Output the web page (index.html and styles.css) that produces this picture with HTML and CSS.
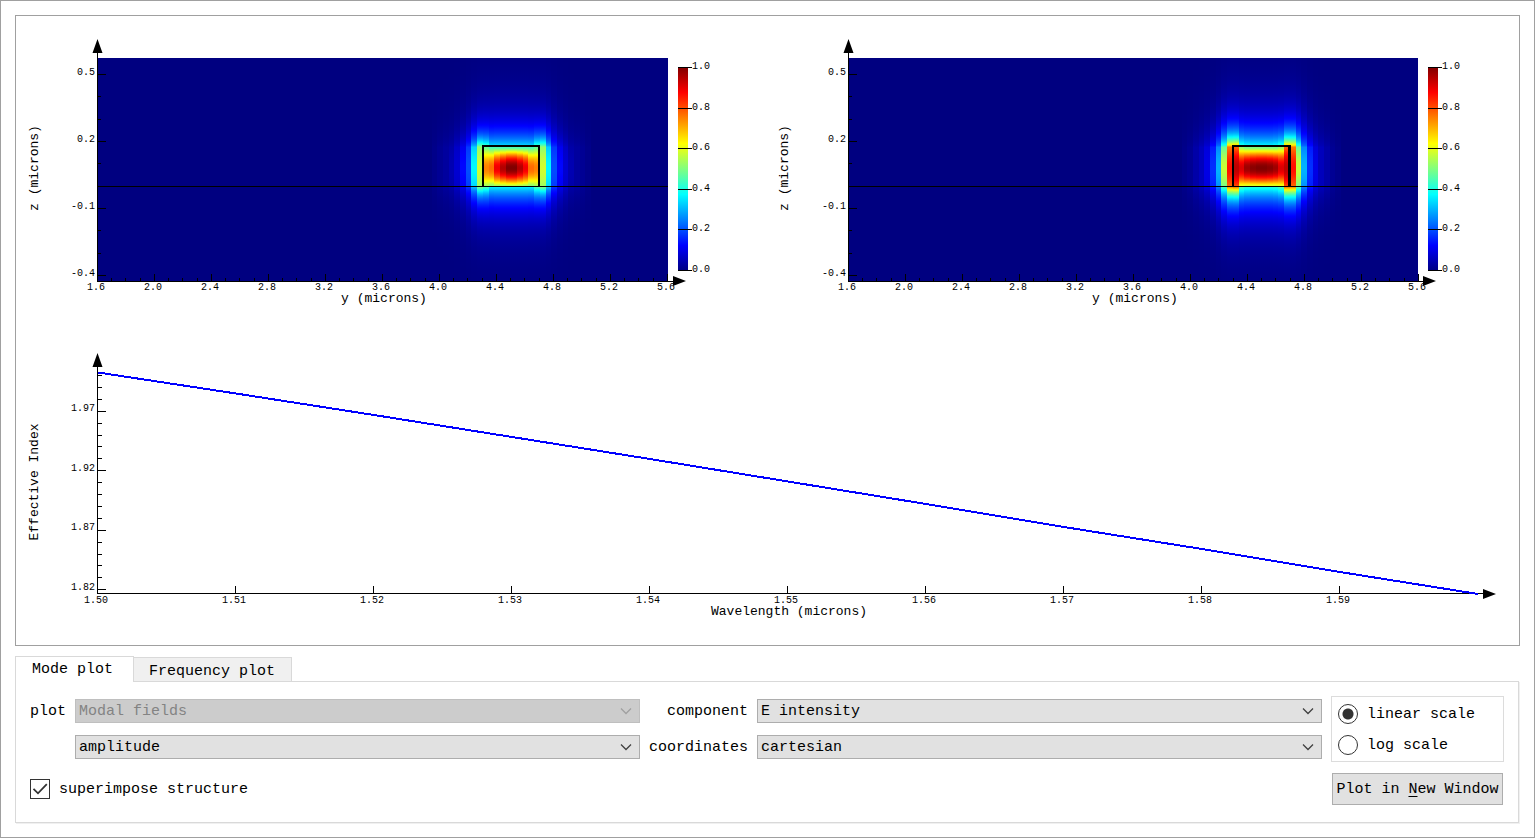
FILE: index.html
```html
<!DOCTYPE html>
<html lang="en">
<head>
<meta charset="utf-8">
<title>Mode plot</title>
<link rel="stylesheet" href="styles.css">
</head>
<body>
<main class="window">
  <section class="plots" aria-label="Plots">
    <svg class="plot" id="field-a" viewBox="0 0 751 320"></svg>
    <svg class="plot" id="field-b" viewBox="0 0 751 320"></svg>
    <svg class="plot plot-wide" id="index-plot" viewBox="0 0 1502 309"></svg>
  </section>

  <div class="tabs" role="tablist">
    <button class="tab tab-active" type="button" role="tab" aria-selected="true">Mode plot</button>
    <button class="tab" type="button" role="tab" aria-selected="false">Frequency plot</button>
  </div>

  <form class="panel">
    <label for="plot">plot</label>
    <span class="combo">
      <select id="plot" disabled><option>Modal fields</option></select>
      <svg class="chevron" viewBox="0 0 12 8"><path d="M1 1.5 6 6.5 11 1.5"/></svg>
    </span>
    <label class="label-right" for="component">component</label>
    <span class="combo">
      <select id="component"><option>E intensity</option></select>
      <svg class="chevron" viewBox="0 0 12 8"><path d="M1 1.5 6 6.5 11 1.5"/></svg>
    </span>

    <fieldset class="scale">
      <label class="choice"><input type="radio" name="scale" checked><span>linear scale</span></label>
      <label class="choice"><input type="radio" name="scale"><span>log scale</span></label>
    </fieldset>

    <span class="combo combo-second">
      <select id="quantity" aria-label="quantity"><option>amplitude</option></select>
      <svg class="chevron" viewBox="0 0 12 8"><path d="M1 1.5 6 6.5 11 1.5"/></svg>
    </span>
    <label class="label-right" for="coordinates">coordinates</label>
    <span class="combo">
      <select id="coordinates"><option>cartesian</option></select>
      <svg class="chevron" viewBox="0 0 12 8"><path d="M1 1.5 6 6.5 11 1.5"/></svg>
    </span>

    <label class="superimpose">
      <span class="check">
        <input type="checkbox" checked>
        <svg class="tick" viewBox="0 0 20 20"><path d="M3.5 9.8 8 14.3 16.8 5.2"/></svg>
      </span><span>superimpose structure</span>
    </label>
    <button class="push" type="button">Plot in <u>N</u>ew Window</button>
  </form>
</main>
<script src="plots.js"></script>
</body>
</html>
```
FILE: styles.css
```css
* {
  box-sizing: border-box;
}

body {
  margin: 0 1px 1px 0;
  background: #fff;
  color: #000;
  font: 15px/20px "Liberation Mono", "Courier New", monospace;
}

button,
select {
  font: inherit;
  color: inherit;
}

.window {
  border: 1px solid #a0a0a0;
  padding: 14px;
}

.plots {
  display: grid;
  grid-template-columns: 1fr 1fr;
  border: 1px solid #a0a0a0;
  padding-right: 1px;
}

.plot {
  display: block;
  width: 100%;
  height: auto;
}

.plot-wide {
  grid-column: 1 / -1;
}

.axis,
.structure {
  fill: none;
  stroke: #000;
  shape-rendering: crispEdges;
}

.cell {
  shape-rendering: crispEdges;
}

.curve {
  fill: none;
  stroke: #00f;
  stroke-width: 2;
  shape-rendering: crispEdges;
}

.tick-label {
  font-size: 10px;
  fill: #000;
}

.axis-label {
  font-size: 13px;
  fill: #000;
  text-anchor: middle;
}

.middle {
  text-anchor: middle;
}

.end {
  text-anchor: end;
}

.tabs {
  display: flex;
  align-items: flex-end;
  margin-top: 10px;
}

.tab {
  height: 24px;
  padding: 3px 16px 0 15px;
  border: 1px solid #d9d9d9;
  border-left: 0;
  border-bottom: 0;
  background: #f0f0f0;
  line-height: 22px;
}

.tab-active {
  position: relative;
  height: 26px;
  margin-bottom: -1px;
  padding: 1px 20px 0 16px;
  border-left: 1px solid #d9d9d9;
  background: #fff;
}

.panel {
  display: grid;
  grid-template-columns: auto 1fr auto 1fr 173px;
  grid-template-rows: 24px 24px 34px;
  gap: 12px 9px;
  align-items: center;
  margin-right: 1px;
  padding: 17px 14px;
  border: 1px solid #d9d9d9;
  box-shadow: 1px 1px 0 #f0f0f0;
}

.panel > label,
.choice span {
  padding-top: 2px;
}

.label-right {
  text-align: right;
}

.combo {
  position: relative;
  display: block;
}

.combo-second {
  grid-column: 2;
}

.combo select {
  appearance: none;
  display: block;
  width: 100%;
  height: 24px;
  padding: 2px 30px 0 3px;
  border: 1px solid #adadad;
  border-radius: 0;
  background: #e1e1e1;
}

.combo select:disabled {
  border-color: #bfbfbf;
  background: #ccc;
  color: #838383;
  opacity: 1;
}

.chevron {
  position: absolute;
  top: 8px;
  right: 8px;
  width: 12px;
  height: 8px;
  fill: none;
  stroke: #404040;
  stroke-width: 1.3;
  pointer-events: none;
}

select:disabled + .chevron {
  stroke: #a0a0a0;
}

.scale {
  grid-column: 5;
  grid-row: 1 / 3;
  align-self: stretch;
  display: flex;
  flex-direction: column;
  gap: 11px;
  min-width: 0;
  margin: -3px 0;
  padding: 7px 6px;
  border: 1px solid #dcdcdc;
}

.choice {
  display: flex;
  align-items: center;
  gap: 9px;
  height: 20px;
}

.choice input {
  appearance: none;
  width: 20px;
  height: 20px;
  margin: 0;
  border: 1px solid #333;
  border-radius: 50%;
  background: #fff;
}

.choice input:checked {
  background: radial-gradient(circle, #333 5px, #fff 6px);
}

.superimpose {
  grid-column: 1 / 5;
  display: flex;
  align-items: center;
  gap: 9px;
}

.superimpose > span:last-child {
  padding-top: 2px;
}

.check {
  position: relative;
  display: block;
  width: 20px;
  height: 20px;
}

.check input {
  appearance: none;
  display: block;
  width: 20px;
  height: 20px;
  margin: 0;
  border: 1px solid #333;
  background: #fff;
}

.tick {
  position: absolute;
  inset: 0;
  fill: none;
  stroke: #333;
  stroke-width: 1.8;
  pointer-events: none;
}

.check input:not(:checked) + .tick {
  display: none;
}

.push {
  align-self: end;
  height: 32px;
  margin: 0 1px;
  padding: 2px 0 0;
  border: 1px solid #adadad;
  background: #e1e1e1;
  white-space: nowrap;
}

.push u {
  text-underline-offset: 3px;
}
```
FILE: plots.js
```js
const NS = "http://www.w3.org/2000/svg";

function add(parent, name, attrs, text) {
  const el = document.createElementNS(NS, name);
  for (const key in attrs) el.setAttribute(key, attrs[key]);
  if (text !== undefined) el.textContent = text;
  parent.appendChild(el);
  return el;
}

function jet(v) {
  const channel = (c) => {
    const x = 1.5 - Math.abs(4 * v - c);
    return Math.round(255 * Math.max(0, Math.min(1, x)));
  };
  return `rgb(${channel(3)},${channel(2)},${channel(1)})`;
}

// Heat map geometry
const LEFT = 81, TOP = 42, BOTTOM = 265;
const CORE_TOP = 131, CORE_BOTTOM = 170, CELL = 5.7;

function fieldValue(f, k, y) {
  const at = (list) => (k < list.length ? list[k] : 0);
  if (y >= CORE_TOP && y <= CORE_BOTTOM) {
    const t = (y - 152) / 20;
    const shape = Math.max(0, Math.cos((Math.PI / 2) * t));
    return at(f.edge) + (at(f.mid) - at(f.edge)) * shape;
  }
  const above = y < CORE_TOP;
  const d = above ? CORE_TOP - y : y - CORE_BOTTOM;
  const gain = above ? f.above : f.below;
  return gain * (at(f.tail) * Math.exp(-d / f.decay) + at(f.corner) * Math.exp(-d / 9));
}

function drawField(id, f) {
  const svg = document.getElementById(id);
  const defs = add(svg, "defs", {});
  add(svg, "rect", { x: LEFT, y: TOP, width: f.right - LEFT, height: 223, fill: jet(0), class: "cell" });

  const height = BOTTOM - TOP;
  for (let k = 0; k < 16; k++) {
    const g = add(defs, "linearGradient", { id: `${id}-${k}`, x1: 0, x2: 0, y1: 0, y2: 1 });
    const stop = (y, v) => add(g, "stop", { offset: (y - TOP) / height, "stop-color": jet(v) });
    for (let y = TOP; y <= BOTTOM; y++) {
      if (y === CORE_BOTTOM + 1) stop(y, fieldValue(f, k, CORE_BOTTOM));
      stop(y, fieldValue(f, k, y));
    }
    for (const x of [f.center + k * CELL, f.center - (k + 1) * CELL]) {
      const x0 = Math.round(x), x1 = Math.round(x + CELL);
      add(svg, "rect", { x: x0, y: TOP, width: x1 - x0, height, fill: `url(#${id}-${k})`, class: "cell" });
    }
  }

  // Waveguide outline and substrate
  add(svg, "path", { class: "axis", d: `M${LEFT} 170.5H${f.right}` });
  add(svg, "path", { class: "structure", "stroke-width": 2, d: `M${f.box} 170V130H${f.box + 56}` });
  add(svg, "path", { class: "structure", "stroke-width": f.wall, d: `M${f.box + 56 + (f.wall - 2) / 2} 129V170` });

  // Axes and ticks
  let d = `M81.5 36V265.5H660`;
  for (let i = 0; i <= 40; i++) {
    const x = Math.round(81 + i * 14.25 - 0.1) + 0.5;
    d += `M${x} 265V${i % 4 ? 262 : 258}`;
  }
  for (let i = 0; i < 10; i++) {
    const y = Math.round(58 + i * 22.35) + 0.5;
    d += `M81 ${y}H${i % 3 ? 85 : 90}`;
  }
  add(svg, "path", { class: "axis", d });
  add(svg, "path", { d: `M81.5 23 76.5 37H86.5ZM${f.right + 18} 265 ${f.right + 5} 260V270Z` });

  ["1.6", "2.0", "2.4", "2.8", "3.2", "3.6", "4.0", "4.4", "4.8", "5.2", "5.6"].forEach((t, i) =>
    add(svg, "text", { x: 80 + i * 57, y: 274, class: "tick-label middle" }, t));
  ["0.5", "0.2", "-0.1", "-0.4"].forEach((t, i) =>
    add(svg, "text", { x: 79, y: 59 + i * 67, class: "tick-label end" }, t));
  add(svg, "text", { x: 368, y: 286, class: "axis-label" }, "y (microns)");
  add(svg, "text", { transform: `translate(${f.labelX} 152) rotate(-90)`, class: "axis-label" }, "z (microns)");

  // Color bar
  const bar = add(defs, "linearGradient", { id: `${id}-bar`, x1: 0, x2: 0, y1: 0, y2: 1 });
  for (let i = 0; i <= 32; i++) add(bar, "stop", { offset: i / 32, "stop-color": jet(1 - i / 32) });
  add(svg, "rect", { x: f.bar, y: 51, width: 10, height: 204, fill: `url(#${id}-bar)` });
  ["1.0", "0.8", "0.6", "0.4", "0.2", "0.0"].forEach((t, i) => {
    const y = Math.round(51 + i * 40.6);
    add(svg, "path", { class: "axis", d: `M${f.bar} ${y + 0.5}h14` });
    add(svg, "text", { x: f.bar + 14, y: y + 2, class: "tick-label" }, t);
  });
}

function drawIndex() {
  const svg = document.getElementById("index-plot");
  let d = "M81.5 30V257.5H1468";
  for (let i = 0; i < 19; i++) {
    const y = Math.round(39 + i * 11.9) + 0.5;
    d += `M81 ${y}H${i % 5 === 3 ? 90 : 86}`;
  }
  for (let i = 1; i < 10; i++) d += `M${81.5 + i * 138} 257V250`;
  add(svg, "path", { class: "axis", d });
  add(svg, "path", { d: "M81.5 17 76.5 31H86.5ZM1480 258 1467 253V263Z" });

  const effectiveIndex = [36.5, 57.5, 79, 101, 123, 145.5, 168, 191, 213, 236, 258];
  add(svg, "polyline", {
    class: "curve",
    points: effectiveIndex.map((y, i) => `${82 + i * 138},${y}`).join(" "),
  });

  for (let i = 0; i < 10; i++) {
    add(svg, "text", { x: 80 + i * 138, y: 267, class: "tick-label middle" }, (1.5 + i / 100).toFixed(2));
  }
  ["1.97", "1.92", "1.87", "1.82"].forEach((t, i) =>
    add(svg, "text", { x: 79, y: Math.round(75 + i * 59.6), class: "tick-label end" }, t));
  add(svg, "text", { x: 773, y: 279, class: "axis-label" }, "Wavelength (microns)");
  add(svg, "text", { transform: "translate(22 146) rotate(-90)", class: "axis-label" }, "Effective Index");
}

drawField("field-a", {
  center: 495.3, right: 652, box: 467, wall: 2, bar: 662, labelX: 22,
  mid: [1, 0.95, 0.89, 0.77, 0.75, 0.58, 0.37, 0.2, 0.13, 0.08, 0.05, 0.03, 0.02, 0.01],
  edge: [0.45, 0.45, 0.45, 0.45, 0.48, 0.52, 0.33, 0.18, 0.11, 0.07, 0.04, 0.03, 0.02, 0.01],
  tail: [0.38, 0.38, 0.38, 0.37, 0.36, 0.34, 0.28, 0.18, 0.11, 0.07, 0.04, 0.03, 0.02, 0.01],
  corner: [0, 0, 0, 0.01, 0.13, 0.2, 0.05],
  above: 0.95, below: 1, decay: 20,
});

drawField("field-b", {
  center: 494.3, right: 651, box: 466, wall: 3, bar: 661, labelX: 21,
  mid: [1, 0.99, 0.97, 0.91, 0.94, 0.86, 0.57, 0.3, 0.17, 0.1, 0.06, 0.04, 0.02, 0.01],
  edge: [0.5, 0.5, 0.5, 0.53, 0.78, 0.76, 0.48, 0.26, 0.15, 0.09, 0.06, 0.04, 0.02, 0.01],
  tail: [0.43, 0.43, 0.44, 0.45, 0.48, 0.48, 0.4, 0.26, 0.15, 0.09, 0.06, 0.04, 0.02, 0.01],
  corner: [0, 0, 0, 0.03, 0.34, 0.32, 0.08],
  above: 0.92, below: 1, decay: 21,
});

drawIndex();
```
